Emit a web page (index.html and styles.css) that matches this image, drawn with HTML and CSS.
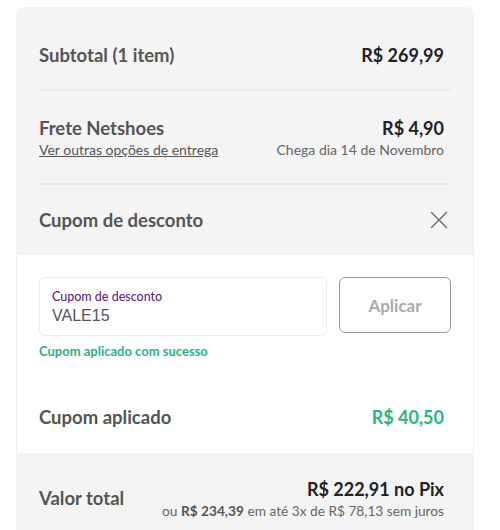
FILE: index.html
```html
<!DOCTYPE html>
<html>
<head>
<meta charset="UTF-8"/>
<title>Resumo do pedido</title>
<link rel="stylesheet" href="styles.css">
</head>
<body>
<div class="summary">
	<div class="row first">
		<span class="label">Subtotal (1 item)</span>
		<span class="value">R$ 269,99</span>
	</div>
	<div class="row shipping">
		<div class="col">
			<span class="label">Frete Netshoes</span>
			<a class="link" href="#">Ver outras opções de entrega</a>
		</div>
		<div class="col right">
			<span class="value">R$ 4,90</span>
			<span class="note">Chega dia 14 de Novembro</span>
		</div>
	</div>
	<div class="row coupon-head">
		<span class="label">Cupom de desconto</span>
		<svg class="close" width="18" height="18" viewBox="0 0 18 18"><path d="M1 1L17 17M17 1L1 17" stroke="#6b6b6b" stroke-width="1.4" fill="none"/></svg>
	</div>
	<div class="coupon">
		<div class="coupon-form">
			<label class="field">
				<span class="field-label">Cupom de desconto</span>
				<input type="text" value="VALE15"/>
			</label>
			<button class="apply">Aplicar</button>
		</div>
		<div class="success">Cupom aplicado com sucesso</div>
		<div class="row applied">
			<span class="label">Cupom aplicado</span>
			<span class="value green">R$ 40,50</span>
		</div>
	</div>
	<div class="row total">
		<span class="label">Valor total</span>
		<div class="col right">
			<span class="value">R$ 222,91 no Pix</span>
			<span class="note">ou <b>R$ 234,39</b> em até 3x de R$ 78,13 sem juros</span>
		</div>
	</div>
</div>
</body>
</html>
```

FILE: styles.css
```css
html, body { margin: 0; background: #fff; }
body { font-family: Lato, 'Open Sans', sans-serif; color: #555; padding: 7px 26px 0 16px; }

.summary { background: #f4f4f4; border-radius: 8px 8px 0 0; }
.row { display: flex; justify-content: space-between; align-items: center; margin: 0 23px; }
.row + .row { border-top: 2px solid #e9e9e9; }
.first { height: 68px; padding-top: 14px; }
.shipping { height: 92px; }
.coupon-head { height: 70px; }
.col { display: flex; flex-direction: column; }
.col.right { align-items: flex-end; }
.row > .value, .col.right { margin-right: 7px; }

.label { font-size: 18.5px; font-weight: 700; color: #555; }
.value { font-size: 18px; font-weight: 700; color: #222; }
.link { font-size: 14px; color: #555; margin-top: 2px; }
.note { font-size: 14px; color: #666; margin-top: 2px; }
.total .note { font-size: 13.7px; }
.note b { color: #555; }
.close { margin-right: 3px; }

.coupon { background: #fff; border: 1px solid #f0f0f0; border-width: 0 1px; padding: 22px 22px 0; }
.coupon-form { display: flex; gap: 12px; }
.field {
	flex: 1; display: flex; flex-direction: column; justify-content: center;
	height: 59px; box-sizing: border-box; padding: 0 12px;
	border: 1px solid #ececec; border-radius: 6px;
}
.field-label { font-size: 12.5px; color: #5b2a86; font-weight: 500; }
.field input {
	border: 0; padding: 0; margin-top: 3px; outline: none; background: none;
	font-family: 'Liberation Sans', Arial, sans-serif; font-size: 16px; color: #555;
}
.apply {
	width: 112px; height: 56px; box-sizing: border-box;
	border: 1.5px solid #9a9a9a; border-radius: 6px; background: #fff;
	font-family: inherit; font-size: 17px; font-weight: 700; color: #aaa;
}
.success { font-size: 13px; font-weight: 700; color: #2bb57e; margin-top: 7px; }
.applied { margin: 0; height: 72px; padding-top: 22px; }
.green { color: #27b97b; }

.total { margin: 0; padding: 0 23px; height: 90px; background: #f4f4f4; }
```
